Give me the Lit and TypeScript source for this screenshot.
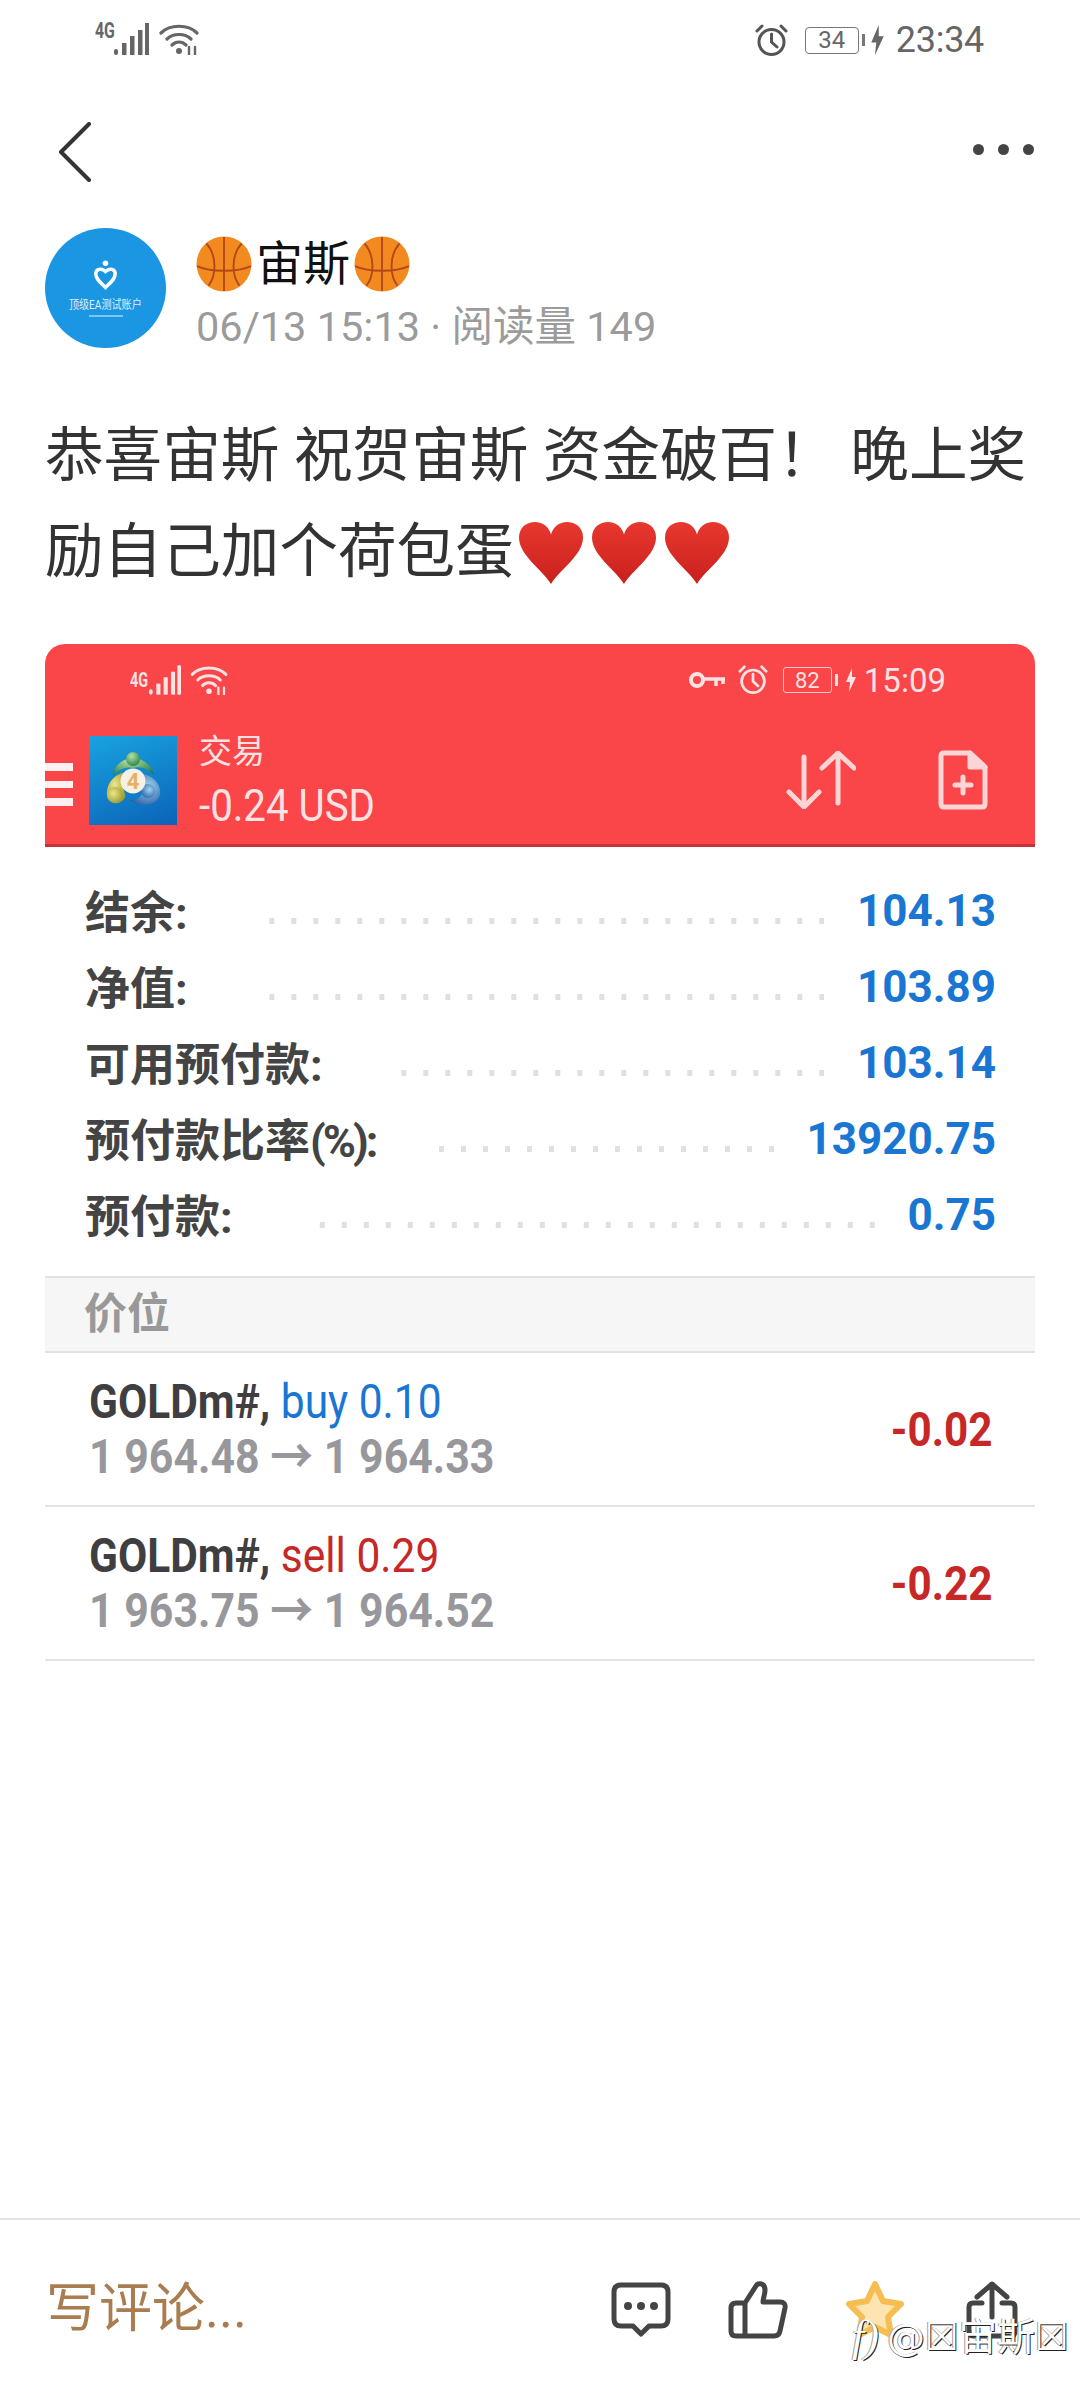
import { LitElement, html, css } from "lit";
import { customElement } from "lit/decorators.js";

const ball = (s: number) => html`<svg width=${s} height=${s} viewBox="0 0 54 54">
  <circle cx="27" cy="27" r="26.5" fill="#f28a1f"/>
  <path d="M27 1V53M1 29C14 35 40 35 53 29M10 7C20 18 20 38 12 48M44 7C34 18 34 38 42 48" fill="none" stroke="#b4471a" stroke-width="1.8"/>
</svg>`;
const heart = html`<svg class="heart" width="66" height="62" viewBox="0 0 66 60" preserveAspectRatio="none">
  <defs><linearGradient id="hg" x1="0" y1="0" x2="0" y2="1"><stop offset="0" stop-color="#e8382f"/><stop offset="1" stop-color="#c9201d"/></linearGradient></defs>
  <path d="M33 60C24 46 1 32 1 15C1 5 9 0 17 0C25 0 31 5 33 12C35 5 41 0 49 0C57 0 65 5 65 15C65 32 42 46 33 60Z" fill="url(#hg)"/>
</svg>`;
const signal = (w: number, h: number, c: string) => html`<svg width=${w} height=${h} viewBox="0 0 35 32" fill=${c}>
  <rect x="0" y="26" width="4" height="6" rx="2"/><rect x="8" y="20" width="4.5" height="12"/><rect x="16" y="13" width="4.5" height="19"/><rect x="24" y="7" width="4.5" height="25"/><rect x="31" y="0" width="4" height="32"/>
</svg>`;
const wifi = (w: number, h: number, c: string) => html`<svg width=${w} height=${h} viewBox="0 0 40 32" fill="none" stroke=${c} stroke-width="3.2" stroke-linecap="round">
  <path d="M2 10C11 1 29 1 38 10M8 16C14 10 26 10 32 16M13 22C17 18 23 18 27 22"/>
  <circle cx="20" cy="28" r="3" fill=${c} stroke="none"/><path d="M30 24V32M36 24V32" stroke-width="2.4"/>
</svg>`;
const alarm = (s: number, c: string) => html`<svg width=${s} height=${s} viewBox="0 0 33 33" fill="none" stroke=${c} stroke-width="3" stroke-linecap="round">
  <circle cx="16.5" cy="18" r="12.5"/><path d="M16.5 10V18L22 23M2 7L7 2M31 7L26 2"/>
</svg>`;
const bolt = (w: number, h: number, c: string) => html`<svg width=${w} height=${h} viewBox="0 0 12 24" fill=${c}><path d="M7 0L1 14H5L4 24L11 9H7Z"/></svg>`;

@customElement("app-root")
export class AppRoot extends LitElement {
  static styles = css`
    :host { display: flex; flex-direction: column; width: 1080px; height: 2400px; background: #fff; overflow: hidden; position: relative; color: #333; font-family: Roboto, "Noto Sans CJK SC", sans-serif; }
    svg { display: block; flex: none; }
    .cond { display: inline-block; transform: scaleX(.885); transform-origin: left center; white-space: nowrap; }
    .cond.r { transform-origin: right center; }
    .usd { transform: scaleX(.915); }
    .pl .cond { transform: scaleX(.88); }

    .status { height: 80px; flex: none; display: flex; align-items: center; padding: 0 96px 0 95px; color: #666; }
    .net { position: relative; top: -1px; display: flex; align-items: flex-start; }
    .g4 { font-size: 22px; font-weight: 700; line-height: 16px; width: 19px; transform: scaleX(.72); }
    .net .wf { margin-left: 10px; }
    .spacer { flex: 1; }
    .batt { width: 54px; height: 27px; border: 1.5px solid #777; border-radius: 4px; box-sizing: border-box; display: flex; align-items: center; justify-content: center; font-size: 24px; margin-left: 17px; }
    .nub { width: 3px; height: 12px; background: #777; margin: 0 4px 0 3px; }
    .clock { font-size: 36px; margin-left: 10px; letter-spacing: -0.3px; }

    .nav { height: 148px; flex: none; display: flex; align-items: center; justify-content: space-between; padding: 0 46px 0 58px; box-sizing: border-box; margin-top: -2px; margin-bottom: 2px; }
    .dots { display: flex; gap: 14px; margin-top: -5px; }
    .dots i { width: 11px; height: 11px; background: #444; border-radius: 50%; }

    .author { display: flex; padding-left: 45px; gap: 30px; }
    .avatar { width: 121px; height: 120px; border-radius: 50%; background: #1b96e3; display: flex; flex-direction: column; align-items: center; color: #fff; padding-top: 31px; box-sizing: border-box; }
    .avatar span { font-size: 12px; line-height: 14px; margin-top: 7px; white-space: nowrap; opacity: .85; transform: scaleX(.84); }
    .avatar i { width: 34px; height: 2px; margin-top: 3px; background: rgba(255,255,255,.45); }
    .who { display: flex; flex-direction: column; }
    .name { display: flex; align-items: center; font-size: 47px; line-height: 54px; color: #111; margin-top: 8px; gap: 4px; }
    .meta { font-size: 41.5px; line-height: 48px; color: #9b9b9b; margin-top: 11px; white-space: nowrap; }

    .post { margin: 57px 45px 0; font-size: 58.6px; line-height: 96px; color: #333; }
    .hearts { display: inline-flex; gap: 7px; vertical-align: -12px; margin: -12px 0 -12px 4px; }

    .card { margin: 44px 45px 0; }
    .head { height: 203px; box-sizing: border-box; background: #fa4549; border-radius: 20px 20px 0 0; border-bottom: 3px solid #c93238; color: #fce3e3; }
    .hstatus { height: 72px; display: flex; align-items: center; padding: 0 89px 0 85px; }
    .hstatus .g4 { font-size: 20px; width: 19px; }
    .key { margin-right: 12px; }
    .hbatt { width: 49px; height: 26px; border: 1.5px solid #fbc8c8; border-radius: 3px; box-sizing: border-box; display: flex; align-items: center; justify-content: center; font-size: 22px; margin-left: 15px; }
    .hnub { width: 3px; height: 12px; background: #fce3e3; margin: 0 7px 0 3px; }
    .htime { font-size: 33px; margin-left: 7px; }
    .wifi2 { margin-left: 9px; }
    .bar { display: flex; align-items: center; height: 128px; position: relative; padding: 0 47px 0 44px; }
    .burger { position: absolute; left: 0; top: 47px; display: flex; flex-direction: column; gap: 10px; }
    .burger i { width: 28px; height: 7.5px; background: #fdf0f0; }
    .mt { width: 88px; height: 89px; background: linear-gradient(160deg, #19a3e0, #0b63b8); display: flex; align-items: center; justify-content: center; }
    .ttl { margin-left: 22px; display: flex; flex-direction: column; }
    .ttl .a { font-size: 33px; line-height: 44px; }
    .ttl .b { font-size: 44px; line-height: 54px; margin-top: 5px; margin-bottom: -3px; }
    .updown { margin-left: auto; margin-right: 82px; }

    .rows { padding: 26px 39px 23px 40px; }
    .row { height: 76px; display: flex; align-items: center; }
    .lab { font-size: 45px; font-weight: 700; color: #444; white-space: nowrap; margin-bottom: 4px; }
    .lab small { font-size: inherit; letter-spacing: -3px; }
    .lead { flex: 1; height: 6px; margin: 20px 33px 0 78px; background: linear-gradient(to left, #e0e0e0 5px, transparent 5px) right top / 22px 6px repeat-x; }
    .lead.m { margin-left: 48px; }
    .val { font-size: 44px; font-weight: 700; color: #1976d2; white-space: nowrap; }

    .sec { height: 77px; box-sizing: border-box; border-top: 2px solid #e2e2e2; border-bottom: 2px solid #e2e2e2; background: #f6f6f6; display: flex; align-items: center; padding: 0 0 10px 39px; font-size: 43px; font-weight: 700; color: #999; }
    .pos { height: 154px; box-sizing: border-box; border-bottom: 2px solid #e4e4e4; display: flex; justify-content: space-between; align-items: center; padding: 0 43px 0 44px; }
    .pos .l1, .pos .l2 { font-size: 48px; line-height: 55px; font-weight: 700; }
    .pos .l1 { color: #3f3f42; display: block; }
    .pos .l1 em { font-style: normal; font-weight: 400; }
    .buy { color: #1976d2; }
    .sell { color: #c62828; }
    .pos .l2 { color: #98989c; display: block; transform: scaleX(.893); }
    .pl { font-size: 48px; font-weight: 700; color: #c62828; }

    .main { flex: 1; }
    .foot { height: 182px; flex: none; box-sizing: border-box; border-top: 2px solid #e3e3e3; display: flex; align-items: center; padding: 0 58px 0 46px; }
    .write { font-size: 53px; color: #aa7d50; white-space: nowrap; margin-bottom: 12px; }
    .ficons { margin-left: auto; display: flex; gap: 57px; align-items: center; }
    .mark { position: absolute; left: 852px; top: 2315px; display: flex; align-items: center; font-size: 38px; line-height: 44px; color: #fff; text-shadow: 1px 1px 0 #222, -1px 0 0 #999; white-space: nowrap; font-family: "DejaVu Sans", "Noto Sans CJK SC", sans-serif; }
    .mark b { font-family: "Liberation Serif", serif; font-style: italic; font-size: 44px; font-weight: 400; margin-right: 8px; }
  `;

  private rows = [
    ["结余:", "", "104.13", ""],
    ["净值:", "", "103.89", ""],
    ["可用预付款:", "", "103.14", ""],
    ["预付款比率", "(%):", "13920.75", "m"],
    ["预付款:", "", "0.75", ""],
  ];

  render() {
    return html`
      <div class="status">
        <div class="net"><span class="g4 cond">4G</span>${signal(35, 32, "#666")}<span class="wf">${wifi(40, 32, "#666")}</span></div>
        <div class="spacer"></div>
        ${alarm(33, "#555")}
        <div class="batt">34</div><div class="nub"></div>${bolt(17, 30, "#666")}
        <div class="clock">23:34</div>
      </div>
      <div class="nav">
        <svg width="34" height="60" viewBox="0 0 34 60" fill="none" stroke="#333" stroke-width="4" stroke-linecap="round" stroke-linejoin="round"><path d="M31 2L3 30L31 58"/></svg>
        <div class="dots"><i></i><i></i><i></i></div>
      </div>
      <div class="main">
        <div class="author">
          <div class="avatar">
            <svg width="25" height="32" viewBox="0 0 36 44" fill="none" stroke="#fff" stroke-width="5"><circle cx="18" cy="5" r="4" fill="#fff" stroke="none"/><path d="M18 40C10 32 4 28 4 20C4 14 12 11 18 17C24 11 32 14 32 20C32 28 26 32 18 40Z"/></svg>
            <span>顶级EA测试账户</span><i></i>
          </div>
          <div class="who">
            <div class="name">${ball(56)}<span>宙斯</span>${ball(56)}</div>
            <div class="meta">06/13 15:13 · 阅读量 149</div>
          </div>
        </div>
        <div class="post">恭喜宙斯 祝贺宙斯 资金破百！ 晚上奖励自己加个荷包蛋<span class="hearts">${heart}${heart}${heart}</span></div>
        <div class="card">
          <div class="head">
            <div class="hstatus">
              <span class="g4 cond">4G</span>${signal(32, 30, "#fce3e3")}<span class="wifi2">${wifi(38, 30, "#fce3e3")}</span>
              <div class="spacer"></div>
              <svg class="key" width="37" height="18" viewBox="0 0 37 18" fill="none" stroke="#fce3e3" stroke-width="4"><circle cx="8" cy="9" r="6"/><path d="M14 8H36M27 8V15M34 8V13" stroke-width="3.5"/></svg>
              ${alarm(30, "#fce3e3")}
              <div class="hbatt">82</div><div class="hnub"></div>${bolt(12, 24, "#fce3e3")}
              <div class="htime">15:09</div>
            </div>
            <div class="bar">
              <div class="burger"><i></i><i></i><i></i></div>
              <div class="mt">
                <svg width="62" height="60" viewBox="0 0 62 60">
                  <defs>
                    <radialGradient id="gr" cx=".4" cy=".3" r=".8"><stop offset="0" stop-color="#b5e3a6"/><stop offset="1" stop-color="#1f7a3e"/></radialGradient>
                    <radialGradient id="yl" cx=".4" cy=".4" r=".8"><stop offset="0" stop-color="#efe58a"/><stop offset="1" stop-color="#8a8f1e"/></radialGradient>
                    <radialGradient id="bl" cx=".6" cy=".4" r=".8"><stop offset="0" stop-color="#9fd4f2"/><stop offset="1" stop-color="#1a4f9c"/></radialGradient>
                  </defs>
                  <path d="M11 26C13 13 22 10 25 9C24 2 38 2 37 9C44 11 50 17 52 25C45 18 38 16 31 18C23 16 16 20 11 26Z" fill="url(#gr)"/>
                  <circle cx="31" cy="9" r="7" fill="url(#gr)"/>
                  <path d="M24 22C12 24 4 34 5 45C6 54 17 56 22 49C26 46 20 40 21 34C22 30 24 26 24 22Z" fill="url(#yl)"/>
                  <circle cx="13" cy="45" r="8" fill="url(#yl)"/>
                  <path d="M38 24C50 24 60 34 58 45C55 56 38 58 28 50C34 50 40 48 41 40C42 34 40 28 38 24Z" fill="url(#bl)"/>
                  <circle cx="46" cy="41" r="7" fill="url(#bl)"/>
                  <circle cx="31" cy="31" r="12.5" fill="#f6f1e4"/>
                  <text x="31" y="39" font-size="22" font-weight="700" fill="#e6b062" text-anchor="middle" font-family="Roboto">4</text>
                </svg>
              </div>
              <div class="ttl"><span class="a">交易</span><span class="b"><span class="cond usd">-0.24 USD</span></span></div>
              <svg class="updown" width="70" height="58" viewBox="0 0 70 58" fill="none" stroke="#fad5d5" stroke-width="5" stroke-linecap="round" stroke-linejoin="round"><path d="M18 6V56M3 41L18 56L33 41M52 2V52M36 17L52 2L68 17"/></svg>
              <svg width="50" height="60" viewBox="0 0 50 60" fill="none" stroke="#fad5d5" stroke-width="5" stroke-linejoin="round" stroke-linecap="round"><path d="M32 3H6Q3 3 3 6V54Q3 57 6 57H44Q47 57 47 54V17Z"/><path d="M32 3L47 17H32Z" fill="#fad5d5"/><path d="M25 27V43M17 35H33"/></svg>
            </div>
          </div>
          <div class="rows">
            ${this.rows.map(([l, s, v, m]) => html`<div class="row"><span class="lab">${l}<small>${s}</small></span><div class="lead ${m}"></div><span class="val">${v}</span></div>`)}
          </div>
          <div class="sec">价位</div>
          <div class="pos">
            <div><span class="l1 cond">GOLDm#, <em class="buy">buy 0.10</em></span><span class="l2 cond">1 964.48 → 1 964.33</span></div>
            <div class="pl"><span class="cond r">-0.02</span></div>
          </div>
          <div class="pos">
            <div><span class="l1 cond">GOLDm#, <em class="sell">sell 0.29</em></span><span class="l2 cond">1 963.75 → 1 964.52</span></div>
            <div class="pl"><span class="cond r">-0.22</span></div>
          </div>
        </div>
      </div>
      <div class="foot">
        <div class="write">写评论...</div>
        <div class="ficons">
          <svg width="60" height="56" viewBox="0 0 60 56" fill="none" stroke="#444" stroke-width="5" stroke-linejoin="round"><path d="M10 3H50Q57 3 57 10V37Q57 44 50 44H38L30 52L22 44H10Q3 44 3 37V10Q3 3 10 3Z"/><g fill="#444" stroke="none"><circle cx="17" cy="24" r="4"/><circle cx="30" cy="24" r="4"/><circle cx="43" cy="24" r="4"/></g></svg>
          <svg width="60" height="58" viewBox="0 0 60 58" fill="none" stroke="#444" stroke-width="5" stroke-linejoin="round"><path d="M17 22L28 5C30 1 37 2 37 9C37 14 35 17 35 21H52Q58 21 57 27L52 50Q51 55 46 55H8Q3 55 3 50V27Q3 22 8 22H17V55"/></svg>
          <svg width="60" height="60" viewBox="0 0 60 60"><path d="M30 4L38 21L56 24L43 37L46 55L30 47L14 55L17 37L4 24L22 21Z" fill="#fde4b0" stroke="#f6bd50" stroke-width="6" stroke-linejoin="round"/></svg>
          <svg width="60" height="58" viewBox="0 0 60 58" fill="none" stroke="#444" stroke-width="5" stroke-linecap="round" stroke-linejoin="round"><path d="M30 36V3M15 16L30 3L45 16M20 22H11Q7 22 7 26V50Q7 55 11 55H49Q53 55 53 50V26Q53 22 49 22H40"/></svg>
        </div>
      </div>
      <div class="mark"><b>f)</b>@☒宙斯☒</div>
    `;
  }
}
